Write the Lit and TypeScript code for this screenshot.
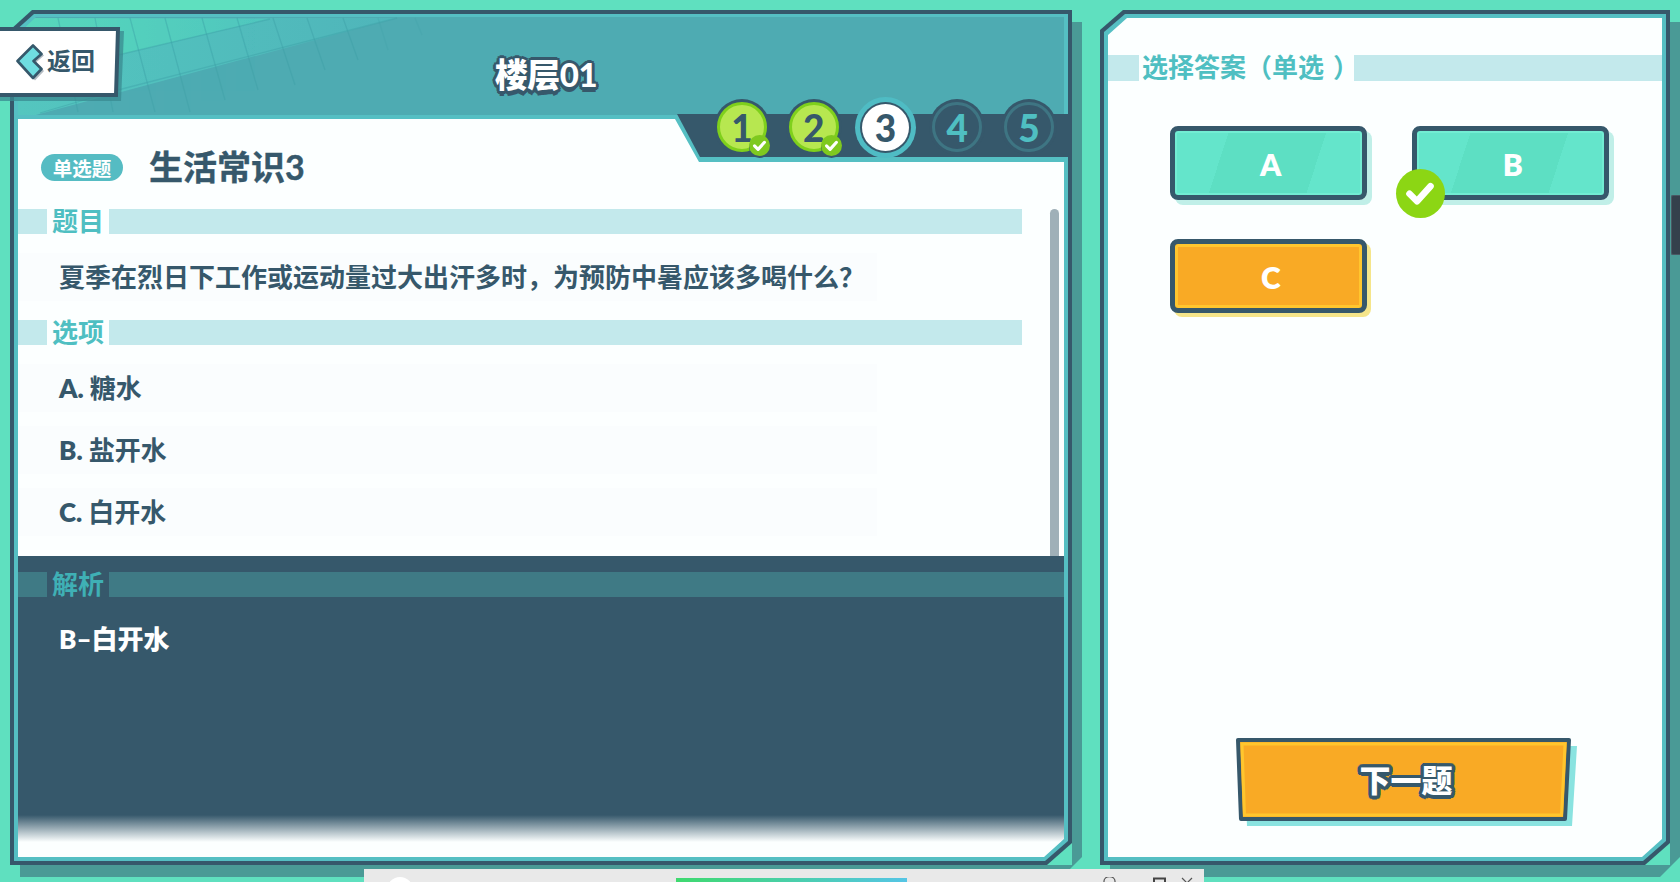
import { LitElement, html, css, svg } from "lit";
import { customElement } from "lit/decorators.js";

const gridLines: number[][] = [
  [58, 18, 78, 112], [95, 18, 113, 112], [130, 18, 155, 112], [165, 18, 190, 112], [202, 18, 225, 100], [237, 18, 258, 90],
  [273, 18, 295, 85], [307, 18, 325, 70], [343, 18, 358, 60], [378, 18, 388, 50], [415, 18, 422, 35],
  [118, 55, 270, 19], [118, 90, 397, 18], [40, 113, 118, 90],
];

const check = (color = "#fff") => html`<svg class="tick" viewBox="0 0 24 24"><path d="M5 12.5l5 5L19 7.5" fill="none" stroke=${color} stroke-width="4.4" stroke-linecap="round" stroke-linejoin="round"/></svg>`;

@customElement("app-root")
export class AppRoot extends LitElement {
  static styles = css`
    :host { display: block; width: 1680px; height: 882px; overflow: hidden; position: relative; background: #5fe0bf;
      font-family: "Lato", "Noto Sans CJK SC", sans-serif; color: #36586b; }
    * { box-sizing: border-box; }
    .stage { display: flex; gap: 28px; padding: 10px 0 0 10px; height: 882px; }
    .panel { position: relative; height: 855px; display: flex; flex-direction: column; }
    .left { width: 1062px; padding: 7px 8px 8px; }
    .right { width: 570px; padding: 45px 8px 8px; }
    .frame { position: absolute; left: 0; top: 0; width: 100%; height: 100%; overflow: visible; }
    .frame + * { position: relative; }

    .head { height: 102px; flex: none; display: flex; align-items: center; justify-content: center; padding: 12px 0 0 10px; position: relative; }
    .head h1 { margin: 0; font-size: 33px; line-height: 40px; font-weight: 900; color: #fff; letter-spacing: -0.5px;
      text-shadow: 3px 0 0 #36586b, -3px 0 0 #36586b, 0 3px 0 #36586b, 0 -3px 0 #36586b, 2.2px 2.2px 0 #36586b, -2.2px 2.2px 0 #36586b, 2.2px -2.2px 0 #36586b, -2.2px -2.2px 0 #36586b, 1.5px 2.6px 0 #36586b, -1.5px 2.6px 0 #36586b, 2.6px 1.5px 0 #36586b, -2.6px 1.5px 0 #36586b, 0 5px 0 #36586b; }
    .title-row { height: 90px; flex: none; display: flex; align-items: center; padding: 6px 0 0 23px; position: relative; }
    .pill { width: 82px; height: 27px; border-radius: 14px; background: #55bcc3; color: #fff; font-size: 19.5px; font-weight: 700;
      display: flex; align-items: center; justify-content: center; }
    .title-row h2 { margin: 0 0 0 26px; font-size: 34px; line-height: 40px; font-weight: 700; -webkit-text-stroke: 0.4px #36586b; }

    .upper { display: flex; height: 347px; flex: none; position: relative; }
    .scroll { flex: 1; padding-right: 28px; }
    .bar { width: 9px; margin-right: 5px; background: #9fb0b8; border-radius: 5px 5px 0 0; }
    .sec { height: 25px; background: #c3e9ec; padding-left: 29px; display: flex; flex: none; }
    .sec > span { background: #fcffff; color: #4fbfc2; font-size: 26px; line-height: 25px; font-weight: 700; padding: 0 0 0 5px; width: 62px; white-space: nowrap; }
    .right .sec > span { padding: 0 0 0 3px; width: 215px; }
    .right .sec { padding-left: 31px; height: 26px; }
    .paren { margin-left: 9px; }
    .q { height: 86px; display: flex; align-items: center; }
    .q div, .o { height: 48px; width: 859px; padding-left: 41px; font-size: 26px; line-height: 36px; font-weight: 700; display: flex; align-items: center; background: #fafdfe; white-space: nowrap; }
    .opts { display: flex; flex-direction: column; gap: 14px; padding-top: 19px; }
    .o b { font-weight: 800; margin-right: 6px; }

    .ana { height: 301px; flex: none; position: relative; padding-top: 16px;
      background: linear-gradient(#36586b 0, #36586b 259px, rgba(54,88,107,0) 286px); }
    .ana .sec { background: #3f7a85; }
    .ana .sec > span { background: #36586b; color: #3fb0b5; }
    .ans { padding: 24px 0 0 41px; font-size: 26px; line-height: 36px; font-weight: 800; color: #fff; }

    .steps { position: absolute; left: 702px; top: 87px; display: flex; gap: 11.75px; }
    .slot { width: 60px; height: 60px; display: flex; align-items: center; justify-content: center; position: relative; }
    .c { border-radius: 50%; display: flex; align-items: center; justify-content: center; font-size: 37px; font-weight: 900; line-height: 1; }
    .done { width: 50px; height: 50px; background: #b7e750; border: 3px solid #7fd01c; box-shadow: 0 0 0 3px #36586b; color: #36586b; }
    .cur { width: 47px; height: 47px; background: #fff; box-shadow: 0 0 0 2px #36586b, 0 0 0 7px #4fbcc4; color: #36586b; }
    .todo { width: 50px; height: 50px; background: #36586b; border: 3px solid #3e7583; box-shadow: 0 0 0 3px #36586b; color: #4fbfc2; }
    .mini { position: absolute; left: 37px; top: 38px; width: 21px; height: 21px; border-radius: 50%; background: #7fc91f;
      box-shadow: 0 2px 0 #36586b; display: flex; align-items: center; justify-content: center; }
    .mini .tick { width: 17px; height: 17px; }

    .back { position: absolute; left: 0; top: 27px; width: 124px; height: 74px; display: flex; align-items: center; padding: 0 0 4px 16px; gap: 3px; font-size: 24px; font-weight: 700; }
    .back svg.bg { position: absolute; left: 0; top: 0; width: 124px; height: 74px; }
    .back svg.ch { width: 28px; height: 37px; position: relative; flex: none; }
    .back span { position: relative; margin-bottom: 6px; }

    .grid { display: grid; grid-template-columns: 197.5px 197.5px; gap: 39px 44.5px; margin: 45px 0 0 61.5px; position: relative; }
    .btn { height: 74px; border: 5px solid #36586b; border-radius: 8px; color: #fff; font-size: 30px; font-weight: 800;
      display: flex; align-items: center; justify-content: center; position: relative; padding: 2px 0 0 5px;
      background: linear-gradient(108deg, #64e5cb 26%, #5ddfc3 26%, #5ddfc3 73%, #64e5cb 73%);
      box-shadow: inset 0 0 0 2px #72edd3, 5px 5px 0 0 #c0efe8; }
    .btn.sel { background: #f9aa25; box-shadow: inset 0 0 0 3px #ffc62e, 4px 4px 0 0 #f5e58a; }
    .pick { position: absolute; left: -21px; top: 37.5px; width: 49px; height: 49px; border-radius: 50%; background: #8cd614; display: flex; align-items: center; justify-content: center; }
    .pick .tick { width: 36px; height: 36px; }

    .next { margin: auto 0 36px 128px; width: 336px; height: 83px; position: relative; display: flex; align-items: center; justify-content: center; flex: none; }
    .next svg { position: absolute; left: 0; top: 0; width: 341px; height: 88px; overflow: visible; }
    .next span { position: relative; font-size: 31px; line-height: 40px; font-weight: 900; color: #fff; margin-left: 4px;
      text-shadow: 3.5px 0 0 #36586b, -3.5px 0 0 #36586b, 0 3.5px 0 #36586b, 0 -3.5px 0 #36586b, 2.5px 2.5px 0 #36586b, -2.5px 2.5px 0 #36586b, 2.5px -2.5px 0 #36586b, -2.5px -2.5px 0 #36586b, 1.5px 3.2px 0 #36586b, -1.5px 3.2px 0 #36586b, 1.5px -3.2px 0 #36586b, -1.5px -3.2px 0 #36586b, 3.2px 1.5px 0 #36586b, -3.2px 1.5px 0 #36586b, 3.2px -1.5px 0 #36586b, -3.2px -1.5px 0 #36586b; }

    .taskbar { position: absolute; left: 364px; bottom: 0; width: 840px; height: 13px; background: #e9e9e9; overflow: hidden; display: flex; padding-top: 8px; }
    .avatar { width: 26px; height: 26px; border-radius: 50%; background: #fff; margin-left: 23px; flex: none; }
    .prog { width: 231px; height: 4px; margin: 1px 0 0 263px; background: linear-gradient(90deg, #3fd96f, #55c5e5); flex: none; }
    .taskbar svg { width: 94px; height: 6px; margin: 0 0 0 196px; flex: none; }
    .handle { position: absolute; right: 0; top: 195px; width: 9px; height: 60px; background: #34404c; border: 1px solid #4a5763; border-right: 0; border-radius: 2px 0 0 2px; }
  `;

  private frameLeft() {
    return svg`<g transform="translate(-10,-10)">
      <defs>
        <clipPath id="hclip"><polygon points="18,34 36,17 1064,17 1064,115 18,115"/></clipPath>
        <linearGradient id="b1" x1="0" x2="1" y1="0" y2="0"><stop offset="0" stop-color="#54c6bf"/><stop offset="1" stop-color="#4fb5ba"/></linearGradient>
        <linearGradient id="b2" x1="0" x2="1" y1="0" y2="0"><stop offset="0" stop-color="#58d8bc"/><stop offset="1" stop-color="#50c6be"/></linearGradient>
      </defs>
      <polygon fill="#4a9a96" points="1072,22 1082,22 1082,857 1062,877 20,877 20,865 1072,865"/>
      <polygon fill="#36586b" points="32,10 1072,10 1072,843 1047,865 10,865 10,30"/>
      <polygon fill="#55bfc3" points="34,14 1068,14 1068,841 1045,861 14,861 14,32"/>
      <g clip-path="url(#hclip)">
        <rect x="18" y="17" width="1046" height="98" fill="#4eabb2"/>
        <polygon fill="url(#b1)" points="18,120 43,113 397,18 18,18"/>
        <polygon fill="url(#b2)" points="18,85 118,55 270,19 18,18"/>
        ${gridLines.map(([a, b, c, d], i) => svg`<line x1=${a} y1=${b} x2=${c} y2=${d} stroke="#3d9fa6" stroke-width="1.3" opacity=${i > 8 && i < 11 ? 0.22 : 0.42}/>`)}
      </g>
      <polygon fill="#fcffff" points="18,119 675,119 699,162 1064,162 1064,839 1044,857 18,857"/>
      <polygon fill="#36586b" points="677,114 1068,114 1068,157 700,157"/>
    </g>`;
  }

  private frameRight() {
    return svg`<g transform="translate(-1100,-10)">
      <polygon fill="#4a9a96" points="1670,22 1680,22 1680,857 1660,877 1110,877 1110,865 1670,865"/>
      <polygon fill="#36586b" points="1123,10 1670,10 1670,843 1645,865 1100,865 1100,30"/>
      <polygon fill="#55bfc3" points="1125,14 1666,14 1666,841 1643,861 1104,861 1104,32"/>
      <polygon fill="#fcffff" points="1127,18 1662,18 1662,839 1642,857 1108,857 1108,35"/>
    </g>`;
  }

  render() {
    return html`
      <div class="stage">
        <section class="panel left">
          <svg class="frame">${this.frameLeft()}</svg>
          <header class="head"><h1>楼层01</h1></header>
          <div class="title-row"><span class="pill">单选题</span><h2>生活常识3</h2></div>
          <div class="upper">
            <div class="scroll">
              <div class="sec"><span>题目</span></div>
              <div class="q"><div>夏季在烈日下工作或运动量过大出汗多时，为预防中暑应该多喝什么？</div></div>
              <div class="sec"><span>选项</span></div>
              <div class="opts">
                <div class="o"><b>A.</b>糖水</div>
                <div class="o"><b>B.</b>盐开水</div>
                <div class="o"><b>C.</b>白开水</div>
              </div>
            </div>
            <div class="bar"></div>
          </div>
          <div class="ana">
            <div class="sec"><span>解析</span></div>
            <div class="ans">B–白开水</div>
          </div>
          <div class="steps">
            <div class="slot"><div class="c done">1</div><div class="mini">${check()}</div></div>
            <div class="slot"><div class="c done">2</div><div class="mini">${check()}</div></div>
            <div class="slot"><div class="c cur">3</div></div>
            <div class="slot"><div class="c todo">4</div></div>
            <div class="slot"><div class="c todo">5</div></div>
          </div>
        </section>
        <section class="panel right">
          <svg class="frame">${this.frameRight()}</svg>
          <div class="sec"><span>选择答案（单选<span class="paren">）</span></span></div>
          <div class="grid">
            <div class="btn">A</div>
            <div class="btn">B<div class="pick">${check()}</div></div>
            <div class="btn sel">C</div>
          </div>
          <div class="next">
            <svg viewBox="0 0 341 88">
              <polygon points="8,8 341,8 336,88 11,88" fill="#8ae3e0"/>
              <polygon points="2,2 333,2 329,81 5,81" fill="#f9aa25" stroke="#36586b" stroke-width="4" stroke-linejoin="round"/>
              <polygon points="6,6 329,6 325.5,77 8.5,77" fill="none" stroke="#ffc62e" stroke-width="3"/>
            </svg>
            <span>下一题</span>
          </div>
        </section>
      </div>
      <div class="back">
        <svg class="bg" viewBox="0 0 124 74">
          <polygon points="0,4 124,4 121,74 0,74" fill="#3a8a90" opacity=".75"/>
          <polygon points="-4,2 118,2 116,68 -4,68" fill="#fff" stroke="#36586b" stroke-width="4"/>
        </svg>
        <svg class="ch" viewBox="0 0 28 37">
          <polygon points="3,18.5 19,2.5 28,11.5 20,18.5 28,27 19,36.5" fill="#b5bcc2" />
          <polygon points="1.5,17 17,1.5 25.5,10 17.5,17 25.5,25 17,34" fill="#6fdde0" stroke="#36586b" stroke-width="2.6" stroke-linejoin="round"/>
        </svg>
        <span>返回</span>
      </div>
      <div class="handle"></div>
      <div class="taskbar">
        <div class="avatar"></div>
        <div class="prog"></div>
        <svg viewBox="0 0 94 6"><path d="M1 6V4a5 4 0 0 1 11 0V6" fill="none" stroke="#555" stroke-width="1.2"/><path d="M51 6V1.5h11V6" fill="none" stroke="#444" stroke-width="2"/><path d="M79 1l5 5M89 1l-5 5" stroke="#555" stroke-width="1.2"/></svg>
      </div>
    `;
  }
}
